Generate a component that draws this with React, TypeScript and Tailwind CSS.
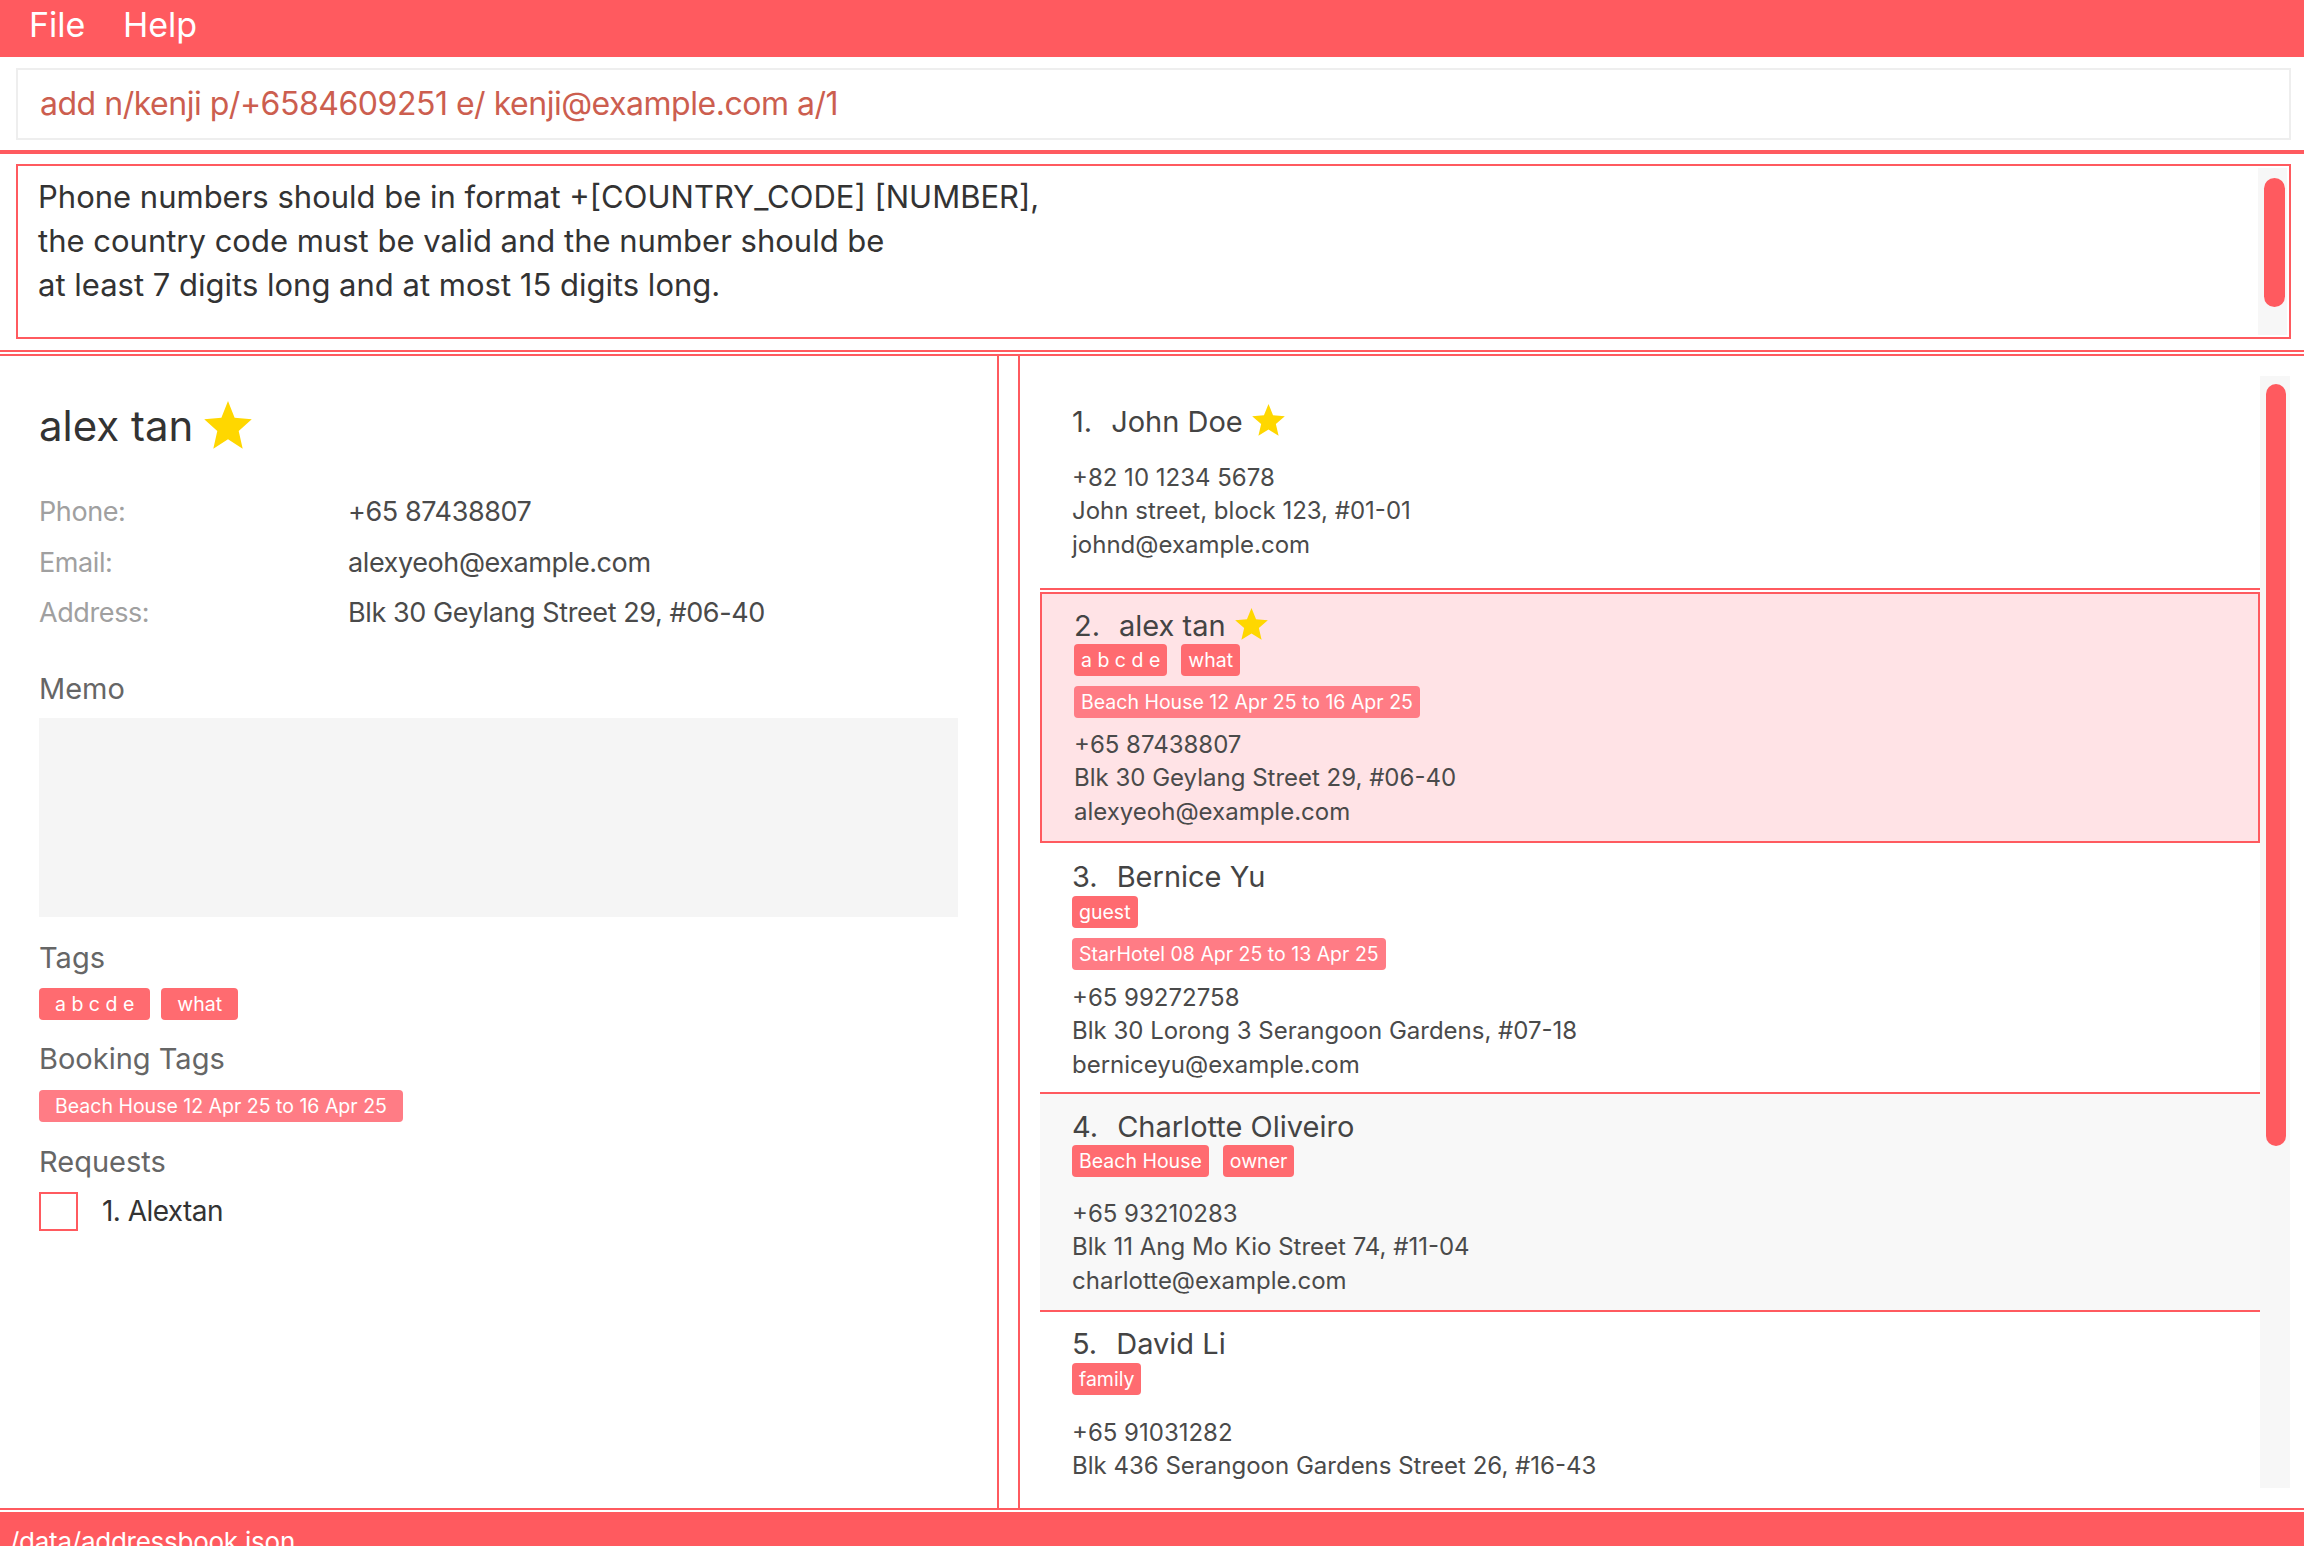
import React from "react";

const STAR_POINTS =
  "50,0 63.23,31.8 97.55,34.55 71.4,56.95 79.39,90.45 50,72.5 20.61,90.45 28.6,56.95 2.45,34.55 36.77,31.8";

function Star({ cls }: { cls: string }) {
  return (
    <svg className={cls} viewBox="2 0 96 91" preserveAspectRatio="none">
      <polygon points={STAR_POINTS} fill="#FFD700" />
    </svg>
  );
}

type CardData = {
  idx: number;
  name: string;
  star?: boolean;
  tags: string[];
  bookings: string[];
  phone: string;
  address: string;
  email: string;
  outer: string;
  inner: string;
  tagsMt: string;
  bookMt: string;
  linesMt: string;
};

const cards: CardData[] = [
  {
    idx: 1,
    name: "John Doe",
    star: true,
    tags: [],
    bookings: [],
    phone: "+82 10 1234 5678",
    address: "John street, block 123, #01-01",
    email: "johnd@example.com",
    outer: "border-b-2 border-[#FF5A5F] bg-white",
    inner: "pt-[27.5px] pb-[27px]",
    tagsMt: "",
    bookMt: "",
    linesMt: "mt-[21px]",
  },
  {
    idx: 2,
    name: "alex tan",
    star: true,
    tags: ["a b c d e", "what"],
    bookings: ["Beach House 12 Apr 25 to 16 Apr 25"],
    phone: "+65 87438807",
    address: "Blk 30 Geylang Street 29, #06-40",
    email: "alexyeoh@example.com",
    outer: "pt-[2px] bg-white",
    inner: "border-2 border-[#FF5A5F] bg-[#FFE3E6] pt-[13.5px] pb-[13px] pl-[30px]",
    tagsMt: "mt-[0.5px]",
    bookMt: "mt-[10px]",
    linesMt: "mt-[9.5px]",
  },
  {
    idx: 3,
    name: "Bernice Yu",
    tags: ["guest"],
    bookings: ["StarHotel 08 Apr 25 to 13 Apr 25"],
    phone: "+65 99272758",
    address: "Blk 30 Lorong 3 Serangoon Gardens, #07-18",
    email: "berniceyu@example.com",
    outer: "border-b-2 border-[#FF5A5F] bg-white",
    inner: "pt-[15.5px] pb-[11px]",
    tagsMt: "mt-[1.5px]",
    bookMt: "mt-[10px]",
    linesMt: "mt-[10.5px]",
  },
  {
    idx: 4,
    name: "Charlotte Oliveiro",
    tags: ["Beach House", "owner"],
    bookings: [],
    phone: "+65 93210283",
    address: "Blk 11 Ang Mo Kio Street 74, #11-04",
    email: "charlotte@example.com",
    outer: "border-b-2 border-[#FF5A5F] bg-[#F8F8F8]",
    inner: "pt-[14.5px] pb-[13px]",
    tagsMt: "mt-[0.5px]",
    bookMt: "",
    linesMt: "mt-[19.5px]",
  },
  {
    idx: 5,
    name: "David Li",
    tags: ["family"],
    bookings: [],
    phone: "+65 91031282",
    address: "Blk 436 Serangoon Gardens Street 26, #16-43",
    email: "lidavid@example.com",
    outer: "bg-white",
    inner: "pt-[13.5px] pb-[13px]",
    tagsMt: "mt-[1.5px]",
    bookMt: "",
    linesMt: "mt-[20.5px]",
  },
];

function PersonCard({ c }: { c: CardData }) {
  return (
    <div className={c.outer}>
      <div className={"flex flex-col pl-[32px] " + c.inner}>
        <div className="flex items-center h-[36px] text-[29px] leading-[36px] text-[#444444]">
          <span>{c.idx}.</span>
          <span className="ml-[19px]">{c.name}</span>
          {c.star && <Star cls="w-[33px] h-[32px] ml-[9px] mb-[3px]" />}
        </div>
        {c.tags.length > 0 && (
          <div className={"flex gap-[14px] " + c.tagsMt}>
            {c.tags.map((t) => (
              <span
                key={t}
                className="h-[32px] px-[7px] rounded-[4px] bg-[#FF6B70] text-white text-[19.5px] leading-[32px] whitespace-pre"
              >
                {t}
              </span>
            ))}
          </div>
        )}
        {c.bookings.length > 0 && (
          <div className={"flex gap-[14px] " + c.bookMt}>
            {c.bookings.map((t) => (
              <span
                key={t}
                className="h-[32px] px-[7px] rounded-[4px] bg-[#FF7C85] text-white text-[19.5px] leading-[32px] whitespace-pre"
              >
                {t}
              </span>
            ))}
          </div>
        )}
        <div className={"flex flex-col text-[24px] leading-[33.5px] text-[#4A4A4A] " + c.linesMt}>
          <span>{c.phone}</span>
          <span>{c.address}</span>
          <span>{c.email}</span>
        </div>
      </div>
    </div>
  );
}

export default function App() {
  return (
    <div className="w-[2304px] h-[1546px] overflow-hidden flex flex-col bg-white font-[Inter,sans-serif]">
      {/* Menu bar */}
      <div className="h-[57px] shrink-0 bg-[#FF5A5F] flex items-start pt-[3px] pl-[29px] text-white text-[34px] leading-[44px]">
        <span className="w-[94px]">File</span>
        <span>Help</span>
      </div>

      {/* Command box */}
      <div className="h-[93px] shrink-0 pt-[11px] pb-[10px] pl-[16px] pr-[13px]">
        <div className="h-full border-2 border-[#EEEEEE] flex items-center pl-[22px] text-[32px] tracking-[-0.015em] text-[#CC5E4F]">
          add n/kenji p/+6584609251 e/ kenji@example.com a/1
        </div>
      </div>

      <div className="h-[4px] shrink-0 bg-[#FF5A5F]" />

      {/* Result display */}
      <div className="h-[196px] shrink-0 pt-[10px] pb-[11px] pl-[16px] pr-[13px]">
        <div className="h-full border-2 border-[#FF5A5F] flex">
          <div className="flex-1 pl-[20px] pt-[8.5px] text-[31px] leading-[44px] text-[#333333]">
            <div>Phone numbers should be in format +[COUNTRY_CODE] [NUMBER],</div>
            <div>the country code must be valid and the number should be</div>
            <div>at least 7 digits long and at most 15 digits long.</div>
          </div>
          <div className="w-[29px] my-[2px] mr-[2px] bg-[#F7F7F7] pl-[6px] pt-[10px]">
            <div className="w-[21px] h-[129px] rounded-full bg-[#FF5A5F]" />
          </div>
        </div>
      </div>

      <div className="h-[2px] shrink-0 bg-[#FF5A5F]" />
      <div className="h-[2px] shrink-0" />

      {/* Panels */}
      <div className="h-[1156px] shrink-0 border-t-2 border-b-2 border-[#FF5A5F] flex">
        {/* Left detail panel */}
        <div className="w-[999px] shrink-0 border-r-2 border-[#FF5A5F] pl-[39px] pt-[42px] flex flex-col">
          <div className="flex items-center h-[56px]">
            <span className="text-[42px] leading-[56px] text-[#333333]">alex tan</span>
            <Star cls="w-[48px] h-[48px] ml-[11px] mb-[2px]" />
          </div>
          <div className="mt-[33px] grid grid-cols-[309px_1fr] text-[27px] tracking-[-0.015em] leading-[50.5px]">
            <span className="text-[#A0A0A0]">Phone:</span>
            <span className="text-[#4A4A4A]">+65 87438807</span>
            <span className="text-[#A0A0A0]">Email:</span>
            <span className="text-[#4A4A4A]">alexyeoh@example.com</span>
            <span className="text-[#A0A0A0]">Address:</span>
            <span className="text-[#4A4A4A]">Blk 30 Geylang Street 29, #06-40</span>
          </div>
          <div className="mt-[30.5px] text-[29px] leading-[40px] text-[#666666]">Memo</div>
          <div className="mt-[9px] w-[919px] h-[199px] bg-[#F5F5F5]" />
          <div className="mt-[21px] text-[29px] leading-[40px] text-[#666666]">Tags</div>
          <div className="mt-[10px] flex gap-[11px]">
            <span className="h-[32px] px-[16px] rounded-[4px] bg-[#FF6B70] text-white text-[19.5px] leading-[32px] whitespace-pre">
              a b c d e
            </span>
            <span className="h-[32px] px-[16px] rounded-[4px] bg-[#FF6B70] text-white text-[19.5px] leading-[32px]">
              what
            </span>
          </div>
          <div className="mt-[19px] text-[29px] leading-[40px] text-[#666666]">Booking Tags</div>
          <div className="mt-[11px] flex">
            <span className="h-[32px] px-[16px] rounded-[4px] bg-[#FF7C85] text-white text-[19.5px] leading-[32px]">
              Beach House 12 Apr 25 to 16 Apr 25
            </span>
          </div>
          <div className="mt-[20px] text-[29px] leading-[40px] text-[#666666]">Requests</div>
          <div className="mt-[9px] flex items-center">
            <div className="w-[39px] h-[39px] border-2 border-[#FF5A5F] bg-white" />
            <span className="ml-[24px] text-[28px] tracking-[-0.02em] leading-[40px] text-[#333333]">1. Alextan</span>
          </div>
        </div>

        <div className="w-[19px] shrink-0" />

        {/* Right list panel */}
        <div className="flex-1 border-l-2 border-[#FF5A5F] pt-[20px] pb-[20px] pl-[20px] pr-[14px] flex">
          <div className="flex-1 overflow-hidden flex flex-col">
            {cards.map((c) => (
              <PersonCard key={c.idx} c={c} />
            ))}
          </div>
          <div className="w-[30px] shrink-0 bg-[#F7F7F7] pl-[6px] pt-[8px]">
            <div className="w-[20px] h-[762px] rounded-full bg-[#FF5A5F]" />
          </div>
        </div>
      </div>

      <div className="h-[2px] shrink-0" />

      {/* Status bar */}
      <div className="flex-1 bg-[#FF5A5F] overflow-hidden pl-[10px] pt-[13px] text-white text-[26px] tracking-[-0.01em] leading-[34px]">
        /data/addressbook.json
      </div>
    </div>
  );
}
